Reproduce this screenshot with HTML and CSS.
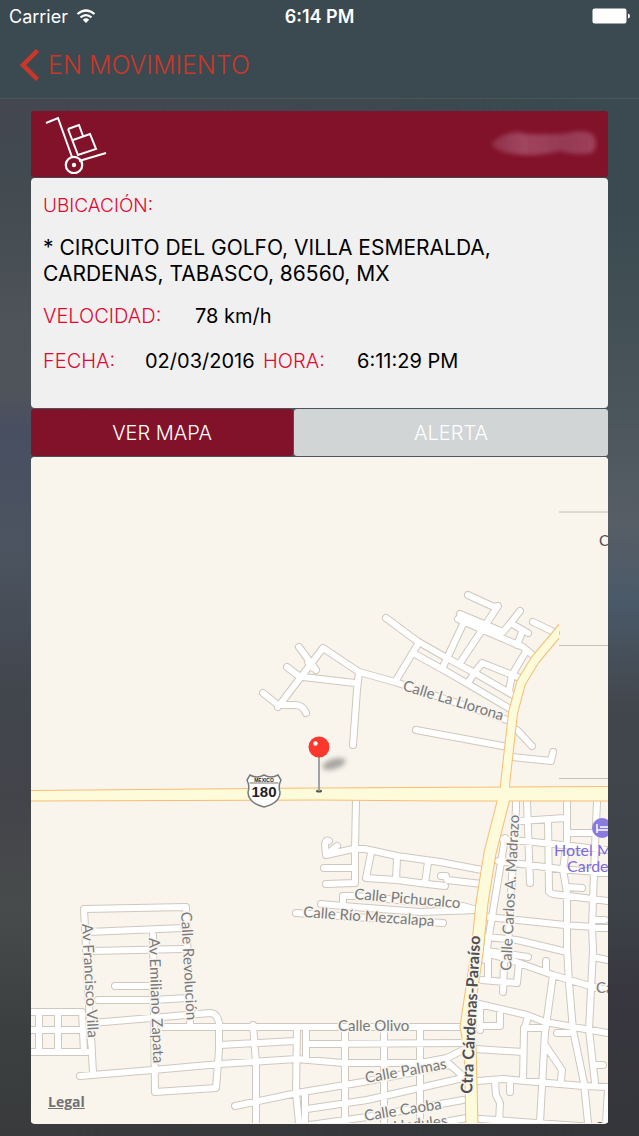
FILE: index.html
```html
<!DOCTYPE html>
<html lang="es">
<head>
<meta charset="utf-8">
<meta name="viewport" content="width=device-width, initial-scale=1">
<title>En movimiento</title>
<link rel="stylesheet" href="styles.css">
</head>
<body class="screen">
<header class="top">
  <div class="status">
    <div class="carrier">Carrier
      <svg class="wifi" viewBox="0 0 20 15" width="20" height="15" aria-hidden="true">
        <path d="M1.500 5Q10-2 18.500 5M4.500 8.300Q10 3.800 15.500 8.300" fill="none" stroke="#fff" stroke-width="2.200"/>
        <path d="M6.800 10.700Q10 8 13.200 10.700L10 14Z" fill="#fff"/>
      </svg>
    </div>
    <time class="clock">6:14 PM</time>
    <div class="battery">
      <svg viewBox="0 0 38 16" width="38" height="16" aria-hidden="true">
        <rect x="0.500" y="0.500" width="34" height="15" rx="2" fill="#fff"/>
        <path d="M36 5.500Q38 6 38 8T36 10.500Z" fill="#fff"/>
      </svg>
    </div>
  </div>
  <button class="back" type="button">
    <svg viewBox="0 0 20 32" width="20" height="32" aria-hidden="true"><path d="M17.500 1.500L3 16L17.500 30.500" fill="none" stroke="#c9372a" stroke-width="4.500"/></svg>
    <span>EN MOVIMIENTO</span>
  </button>
</header>
<main class="content">
  <section class="banner">
    <svg class="cart" viewBox="0 0 62 60" width="62" height="60" aria-hidden="true">
      <g fill="none" stroke="#fff" stroke-width="2">
        <path d="M1 9L13 4L27 43M23 15L34 11L38 22M23 15L33 41L51 35L45 20L28 26M34 47L61 39"/>
        <circle cx="29" cy="51" r="8.200" stroke-width="2.200"/>
      </g>
      <circle cx="29" cy="51" r="2.200" fill="#fff"/>
    </svg>
    <svg class="smudge" viewBox="0 0 112 32" width="112" height="32" aria-hidden="true">
      <defs>
        <filter id="soft"><feGaussianBlur stdDeviation="2"/></filter>
        <linearGradient id="haze"><stop offset="0" stop-color="#8f2f49"/><stop offset=".3" stop-color="#a0455e"/><stop offset=".7" stop-color="#963a53"/><stop offset="1" stop-color="#9d4059"/></linearGradient>
      </defs>
      <path filter="url(#soft)" d="M3 16Q12 5 30 4Q38 7 56 6Q74 7 84 4Q104 1 107 10Q110 22 103 25Q88 28 72 23Q52 28 36 27Q10 26 3 16Z" fill="url(#haze)"/>
    </svg>
  </section>
  <section class="details">
    <dl class="facts">
      <div class="fact location"><dt>UBICACIÓN:</dt><dd>* CIRCUITO DEL GOLFO, VILLA ESMERALDA, CARDENAS, TABASCO, 86560, MX</dd></div>
      <div class="fact speed"><dt>VELOCIDAD:</dt><dd>78 km/h</dd></div>
      <div class="when">
        <div class="fact date"><dt>FECHA:</dt><dd>02/03/2016</dd></div>
        <div class="fact hour"><dt>HORA:</dt><dd>6:11:29 PM</dd></div>
      </div>
    </dl>
  </section>
  <div class="actions">
    <button class="action action-map" type="button">VER MAPA</button>
    <button class="action action-alert" type="button">ALERTA</button>
  </div>
  <section class="map">
    <svg class="map-canvas" viewBox="31 457 577 666" preserveAspectRatio="xMidYMid slice" role="img" aria-label="Mapa">
      <defs>
        <clipPath id="tile"><path d="M31 457H559V785H608V1123H31Z"/></clipPath>
        <filter id="shade" x="-50%" y="-50%" width="200%" height="200%"><feGaussianBlur stdDeviation="2.500"/></filter>
        <path id="streets" d="
          M386 618L417 641L445 657L473 672L513 695M413 653L442 669L468 684L512 710M418 644L395 682
          M278 707L323 648L359 672L395 682L510 721M299 647L316 670M308 662L313 668M287 667L300 677M303 677L355 683
          M359 672L357 690L353 745M263 693L278 705L295 705Q303 705 306 713M416 730L508 747
          M468 595L494 607L498 606L482 630L460 663M460 614L503 632L509 625L520 611M512 624L528 633M522 632L517 645
          M458 619L483 630L523 647L535 657M463 624L442 669M533 622L556 633M520 678L482 663L475 672L468 683
          M525 653L512 675L509 691M517 730L532 746M512 757L551 761L553 752
          M356 800L355 850V883L326 884M324 868H353M329 841Q325 839 325 845L326 855L337 846M326 855L353 849L365 849L397 856L440 862L482 870
          M371 853L366 878L397 880L427 884L445 886M397 858L396 880M428 862L425 883M441 876H446L447 880L482 884
          M355 896H343V905M321 904L355 907L420 912L477 910M355 896L463 906L477 910M296 913L443 923
          M516 802V808L508 947M505 838L492 917L485 960M527 802L530 883M520 821L565 818M548 820L549 892L553 894L608 901
          M567 802L567 840L563 870L567 893L567 947L569 983L573 1030L584 1083L588 1123
          M597 802L595 847L592 927L593 950L589 1030L595 1083M567 833H597M503 839L553 844L608 850M498 861L560 869L608 873
          M567 887L582 888M488 917L565 925L608 928M595 920H605M487 937L517 940L567 952
          M485 953L505 958L553 975L590 986L608 990M487 951L528 957M488 957V980M482 980L517 983L519 963M504 963L503 992M546 961V970
          M553 975L545 1033L544 1050L540 1123M475 1003L527 1015L545 1022L608 1033M480 1007V1030M480 1026H500V1012
          M528 1017L524 1030L523 1080M524 1028H545M557 1033H572M545 1045L562 1070L561 1080M475 1049L523 1052
          M477 1081L503 1079L583 1086L608 1087M495 1082L496 1095L500 1103L499 1122M510 1083V1092M480 1119L608 1128M595 1065H603M593 957L608 960M608 1090L606 1122
          M91 1023V1043L84 909L186 907L190 1023M88 932L183 928M90 951L183 949M153 935L155 1092L216 1088L219 1050L219 1023Q217 1013 210 1013L92 1023
          M115 986H150M98 1000H153L187 998M91 1035L93 1073M80 1076L153 1070L220 1064L297 1059L343 1063H420
          M31 1012H82L84 1052M31 1030H82M31 1052H90M39 1012V1052M58 1012V1052
          M163 1027H460M253 1025L256 1063V1123M220 1045L295 1041M297 1028L296 1093L299 1123M306 1028V1058M305 1093V1123M307 1044L467 1043
          M345 1030V1123M384 1030V1123M420 1027V1123M235 1106L297 1093L363 1082L450 1065M307 1109L367 1100L463 1078M310 1125L367 1117L463 1100
          M420 1063L447 1058L463 1050M447 1062L465 1078M420 1126L467 1118"/>
        <path id="highway-north" clip-path="url(#tile)" d="M566 623L535 660L521 683L513 713L505 785V795"/>
        <path id="highway-south" d="M504 795L503 802L490 853L482 903L477 953L469 1007L466 1027L470 1047L471 1083L472 1128"/>
      </defs>
      <rect x="31" y="457" width="577" height="666" fill="#f9f5ed"/>
      <path d="M559 512H608M559 645.500H608M559 778.500H608" stroke="#c2beb8" fill="none"/>
      <use href="#streets" class="street-edge"/>
      <use href="#streets" class="street"/>
      <path d="M31 790L320 787.500L608 786V801.500H440L320 800.500L31 801.500Z" class="route"/>
      <use href="#highway-north" class="highway-edge"/>
      <use href="#highway-south" class="highway-edge wide"/>
      <path d="M31 791L320 788.500L608 787V800.500H440L320 799.500L31 800.500Z" fill="#fdfbd9"/>
      <use href="#highway-north" class="highway"/>
      <use href="#highway-south" class="highway wide"/>

      <g class="label">
        <text transform="translate(402 690) rotate(17)">Calle La Llorona</text>
        <text transform="translate(354 899) rotate(5)">Calle Pichucalco</text>
        <text transform="translate(303 917) rotate(4)">Calle Río Mezcalapa</text>
        <text x="338" y="1031">Calle Olivo</text>
        <text transform="translate(366 1083) rotate(-10)">Calle Palmas</text>
        <text transform="translate(365 1121) rotate(-9)">Calle Caoba</text>
        <text transform="translate(394 1132) rotate(-7)">Llndules</text>
        <text transform="translate(511 971) rotate(-87)">Calle Carlos A. Madrazo</text>
        <text transform="translate(82 924) rotate(87)">Av Francisco Villa</text>
        <text transform="translate(149 938) rotate(88)">Av Emiliano Zapata</text>
        <text transform="translate(181 912) rotate(87)">Calle Revolución</text>
        <text x="596" y="993">Ca</text>
        <text x="599" y="546" class="dark">C</text>
        <text x="594" y="1133" class="dark">C</text>
        <text transform="translate(472 1094) rotate(-87)" class="major">Ctra Cárdenas-Paraíso</text>
      </g>
      <g class="poi">
        <text x="554" y="856">Hotel M</text>
        <text x="567" y="872">Carde</text>
        <circle cx="602" cy="828" r="10" fill="#8b7be0"/>
        <path d="M597 824V833M597 830H608M600 827H608" stroke="#fff" stroke-width="1.500" fill="none"/>
      </g>

      <g class="shield">
        <path d="M250 775Q257 779 264 775Q271 779 278 775L281 780Q278 786 280 792Q280 803 264 807Q248 803 248 792Q250 786 247 780Z" fill="#fff" stroke="#77797c" stroke-width="1.500"/>
        <path d="M249.500 783H278.500" stroke="#77797c"/>
        <text x="264" y="782" class="shield-country">MEXICO</text>
        <text x="264" y="797" class="shield-number">180</text>
      </g>

      <ellipse cx="334" cy="764" rx="12" ry="5" transform="rotate(-17 334 764)" fill="#555" opacity=".5" filter="url(#shade)"/>
      <ellipse cx="319" cy="791" rx="3" ry="1.500" fill="#555"/>
      <path d="M319 756V791" stroke="#a0a2a5" stroke-width="2"/>
      <circle cx="319" cy="747" r="10.500" fill="#fc372e"/>
      <circle cx="315.500" cy="743.500" r="2.200" fill="#fff"/>
    </svg>
    <a class="legal" href="#legal">Legal</a>
  </section>
</main>
</body>
</html>
```
FILE: styles.css
```css
* { box-sizing: border-box; }

.screen {
  position: relative;
  isolation: isolate;
  display: flex;
  flex-direction: column;
  min-height: 100vh;
  margin: 0;
  font-family: Inter, "Noto Sans", sans-serif;
  color: #000;
  background: linear-gradient(#3a4a50 0, #3a4a50 18%, #4a555b 36%, #575e66 46%, #4a5968 53%, #42474d 62%, #3c4247 80%, #38363f 88%, #34363a 100%);
}

.screen::before {
  content: "";
  position: absolute;
  inset: 0;
  z-index: -1;
  background: linear-gradient(#454650 8%, #414a50 15%, #4d5358 28%, #50545a 34%, #484f61 38%, #4b5460 48%, #41454c 62%, #43444a 70%, #484b4b 80%, #3d4040 90%, #383a3b 100%);
  mask-image: linear-gradient(to right, #000 10%, transparent 90%);
}

.top {
  display: flex;
  flex-direction: column;
  height: 99px;
  background: #3a4a50;
  border-bottom: 1px solid #4a565b;
}

.status {
  display: grid;
  grid-template-columns: 1fr auto 1fr;
  align-items: center;
  height: 32px;
  padding: 0 9px;
  color: #fff;
  font-size: 18px;
}

.carrier { display: flex; align-items: center; gap: 8px; }
.clock { font-weight: 600; }
.battery { display: flex; justify-content: flex-end; }

.back {
  display: flex;
  align-items: center;
  align-self: flex-start;
  gap: 8px;
  height: 66px;
  padding: 0 20px;
  border: 0;
  background: none;
  color: #c9372a;
  font: 300 25px Inter, "Noto Sans", sans-serif;
}

.content {
  display: flex;
  flex: 1;
  flex-direction: column;
  gap: 1px;
  padding: 12px 31px;
}

.banner {
  display: flex;
  align-items: center;
  justify-content: space-between;
  height: 66px;
  padding: 0 8px 0 14px;
  border-radius: 3px;
  background: #821229;
}

.details {
  padding: 15px 12px 34px;
  border-radius: 4px;
  background: #f0f0f0;
}

.facts { display: flex; flex-direction: column; gap: 19px; margin: 0; font-size: 20px; font-weight: 300; line-height: 26px; }
.fact { display: flex; }
.fact dt { color: #e00731; }
.fact dd { margin: 0; font-weight: 400; }
.location { flex-direction: column; gap: 16px; margin-bottom: -3px; }
.location dt { font-size: 19px; }
.location dd { font-size: 21px; }
.speed dt { width: 152px; }
.when { display: flex; }
.date dt { width: 102px; }
.date { width: 220px; }
.hour dt { width: 94px; }

.actions { display: grid; grid-template-columns: 262fr 314fr; gap: 1px; }

.action {
  height: 47px;
  padding: 0;
  border: 0;
  border-radius: 3px;
  color: #fff;
  font: 300 20px Inter, "Noto Sans", sans-serif;
}

.action-map { background: #821229; }
.action-alert { background: #d1d5d6; }

.map {
  position: relative;
  flex: 1;
  overflow: hidden;
  border-radius: 4px;
  background: #f9f5ed;
}

.map-canvas { display: block; width: 100%; height: 100%; }

.street, .street-edge, .highway, .highway-edge { fill: none; stroke-linejoin: round; }
.street-edge { stroke: #d0c7be; stroke-width: 8; stroke-linecap: round; }
.street { stroke: #fff; stroke-width: 6; stroke-linecap: round; }
.route { fill: #f8bd72; }
.highway-edge { stroke: #f8bd72; stroke-width: 10; }
.highway { stroke: #fdfbd9; stroke-width: 8; }
.highway-edge.wide { stroke-width: 13; }
.highway.wide { stroke-width: 11; }

.label { fill: #77797c; stroke: #f9f5ed; stroke-width: 3px; paint-order: stroke; font: 15px Lato, sans-serif; }
.dark { fill: #4f5053; }
.major { fill: #4f5053; font-size: 16px; font-weight: 700; }
.poi { fill: #7c6bdc; font: 16px Lato, sans-serif; }
.shield { text-anchor: middle; fill: #222; }
.shield-country { font: 700 5px "Liberation Sans", sans-serif; }
.shield-number { font: 700 15px "Liberation Sans", sans-serif; }

.legal {
  position: absolute;
  left: 17px;
  bottom: 13px;
  color: #707173;
  font: 700 14px/18px "Open Sans", sans-serif;
}
```
